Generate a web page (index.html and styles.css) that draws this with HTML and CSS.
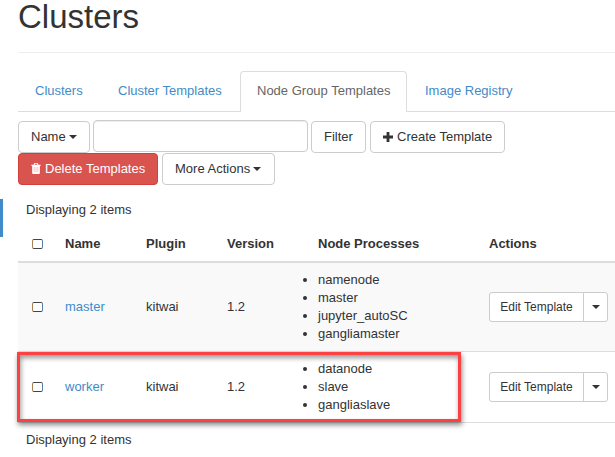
FILE: index.html
```html
<!DOCTYPE html>
<html lang="en">
<head>
<meta charset="utf-8">
<title>Clusters</title>
<link rel="stylesheet" href="styles.css">
</head>
<body>
<div class="page">
  <div class="rail"></div>
  <main class="content">
    <h1>Clusters</h1>
    <nav class="tabs">
      <a class="tab t1">Clusters</a>
      <a class="tab t2">Cluster Templates</a>
      <a class="tab t3 active">Node Group Templates</a>
      <a class="tab t4">Image Registry</a>
    </nav>
    <div class="toolbar">
      <button class="btn b-name">Name<i class="caret"></i></button>
      <input class="search" type="text" aria-label="Filter">
      <button class="btn b-filter">Filter</button>
      <button class="btn b-create"><svg class="plus" width="10" height="10" viewBox="0 0 10 10"><path d="M3.6 0h2.8v3.6H10v2.8H6.4V10H3.6V6.4H0V3.6h3.6z" fill="#333"/></svg>Create Template</button>
    </div>
    <div class="toolbar second">
      <button class="btn danger"><svg class="trash" width="10" height="11" viewBox="0 0 10 12"><path fill="#fff" fill-rule="evenodd" d="M3.2 0h3.6l.8 1.8H10V3.400H9.2v7.4Q9.2 12 8.1 12H1.9Q.8 12 .8 10.800V3.400H0V1.800h2.400zM3.900.9l-.4.9h3l-.4-.9z"/><path d="M3 4.400v5.800M5 4.400v5.800M7 4.400v5.800" stroke="#eba9a7" stroke-width=".7"/></svg>Delete Templates</button>
      <button class="btn b-more">More Actions<i class="caret"></i></button>
    </div>
    <div class="count">Displaying 2 items</div>
    <div class="row head">
      <div><i class="check"></i></div><div>Name</div><div>Plugin</div><div>Version</div><div class="nodes">Node Processes</div><div>Actions</div>
    </div>
    <div class="row master">
      <div><i class="check"></i></div><div><a>master</a></div><div>kitwai</div><div>1.2</div>
      <ul><li>namenode</li><li>master</li><li>jupyter_autoSC</li><li>gangliamaster</li></ul>
      <div class="group"><button class="edit">Edit Template</button><button class="more" aria-label="More"><i class="caret"></i></button></div>
    </div>
    <div class="row worker">
      <div><i class="check"></i></div><div><a>worker</a></div><div>kitwai</div><div>1.2</div>
      <ul><li>datanode</li><li>slave</li><li>gangliaslave</li></ul>
      <div class="group"><button class="edit">Edit Template</button><button class="more" aria-label="More"><i class="caret"></i></button></div>
      <div class="highlight"></div>
    </div>
    <div class="count foot">Displaying 2 items</div>
  </main>
</div>
</body>
</html>
```

FILE: styles.css
```css
* { box-sizing: border-box; }
body {
  margin: 0;
  background: #fff;
  color: #333;
  font: 13px/18px "Liberation Sans", Arial, sans-serif;
  overflow: hidden;
}
.page { display: flex; width: 615px; height: 457px; }
.rail { width: 3px; height: 38px; margin: 199px 15px 0 0; background: #428bca; flex: none; }
.content { width: 597px; flex: none; white-space: nowrap; }
h1 {
  margin: 0;
  height: 53px;
  border-bottom: 1px solid #eee;
  font-size: 33px;
  line-height: 34px;
  font-weight: 400;
}
a { color: #428bca; }
.tabs { display: flex; height: 41px; margin-top: 18px; border-bottom: 1px solid #ddd; }
.tab { height: 41px; padding: 11px 0 0 17px; }
.t1 { width: 83px; }
.t2 { width: 139px; }
.t3 { width: 167px; padding: 10px 0 0 16px; }
.t4 { padding-left: 18px; }
.active { color: #666; background: #fff; border: 1px solid #ddd; border-bottom: 0; border-radius: 4px 4px 0 0; }
.toolbar { display: flex; height: 32px; margin-top: 9px; }
.second { margin-top: 0; }
button { font: inherit; color: #333; background: #fff; border: 1px solid #ccc; padding: 0; margin: 0; white-space: nowrap; }
.btn {
  height: 32px;
  border-radius: 4px;
  display: flex;
  align-items: center;
  padding: 0 0 1px 12px;
}
.caret { display: block; width: 0; border: 4px solid transparent; border-top-color: #333; border-bottom: 0; margin-left: 3px; }
.b-name { width: 72px; }
.search { width: 215px; height: 32px; margin: -1px 3px 0; border: 1px solid #ccc; border-radius: 4px; background: #fff; box-shadow: inset 0 1px 1px rgba(0,0,0,.075); }
.b-filter { width: 55px; margin-right: 4px; }
.b-create { width: 135px; }
.plus { margin-right: 4px; }
.danger { width: 140px; background: #d9534f; border-color: #d43f3a; color: #fff; }
.trash { margin-right: 4px; }
.b-more { width: 113px; margin-left: 4px; }
.count { padding-left: 8px; margin-top: 16px; height: 18px; }
.row {
  display: grid;
  grid-template-columns: 47px 81px 81px 78px 184px 126px;
  align-items: center;
  position: relative;
  border-bottom: 1px solid #ddd;
}
.head { height: 44px; padding-top: 8px; border-bottom: 2px solid #ddd; font-weight: 700; }
.nodes { padding-left: 13px; }
.check { display: block; width: 11px; height: 10px; margin-left: 14px; border: 1px solid #444; border-left-color: #a98158; border-right-color: #587ca5; border-radius: 2px; background: #fff; }
.master { height: 89px; background: #f9f9f9; }
.worker { height: 71px; }
ul { margin: 0; padding: 0 0 0 13px; }
.group { display: flex; height: 30px; }
.edit { width: 95px; border-radius: 3px 0 0 3px; font-size: 12px; }
.more { width: 25px; margin-left: -1px; border-radius: 0 3px 3px 0; }
.more .caret { margin: 0 auto; }
.highlight {
  position: absolute;
  left: -1px;
  top: 0;
  width: 444px;
  height: 70px;
  border: 3px solid #fb4141;
  box-shadow: 1px 3px 5px rgba(0,0,0,.45), inset 1px 3px 5px rgba(0,0,0,.4);
}
.foot { margin-top: 8px; }
```
